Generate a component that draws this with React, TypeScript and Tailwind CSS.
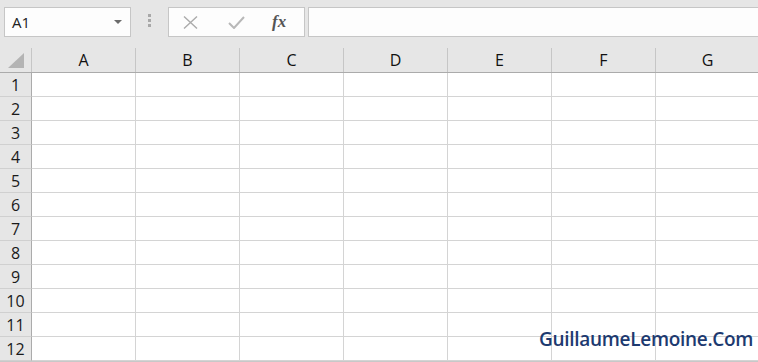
import React from 'react'

const COLS = ['A', 'B', 'C', 'D', 'E', 'F', 'G']
const ROWS = Array.from({ length: 12 }, (_, i) => i + 1)

const FormulaBar = () => {
  return (
    <div className="flex h-[48px] items-start pt-[7px]">
      <div className="ml-[4px] flex h-[30px] w-[127px] items-center justify-between border border-[#c6c6c6] bg-[#fdfdfd] pl-[7px] pr-[8px]">
        <span className="text-[15px] text-[#222]">A1</span>
        <svg width="8" height="5" viewBox="0 0 8 5">
          <path d="M0 0 L8 0 L4 4 Z" fill="#6b6b6b" />
        </svg>
      </div>
      <div className="flex w-[37px] flex-col items-center gap-[2px] pt-[7px]">
        <span className="block h-[3px] w-[3px] bg-[#a8a8a8]" />
        <span className="block h-[3px] w-[3px] bg-[#a8a8a8]" />
        <span className="block h-[3px] w-[3px] bg-[#a8a8a8]" />
      </div>
      <div className="flex h-[30px] w-[137px] items-center border border-[#c6c6c6] bg-[#fdfdfd]">
        <svg className="ml-[14px]" width="15" height="13" viewBox="0 0 15 13">
          <path d="M1 0.5 L14 12.5 M14 0.5 L1 12.5" stroke="#ababab" strokeWidth="1.4" fill="none" />
        </svg>
        <svg className="ml-[30px]" width="17" height="13" viewBox="0 0 17 13">
          <path d="M1 7 L6 12 L16 1" stroke="#b8b8b8" strokeWidth="2" fill="none" />
        </svg>
        <span className="ml-[27px] font-['Liberation_Serif',serif] text-[17px] font-bold italic text-[#555]">
          fx
        </span>
      </div>
      <div className="ml-[3px] h-[30px] flex-1 border border-r-0 border-[#c6c6c6] bg-[#fdfdfd]" />
    </div>
  )
}

const App = () => {
  return (
    <div className="relative h-[362px] w-[758px] overflow-hidden bg-[#e6e6e6] font-['Open_Sans','Noto_Sans',sans-serif]">
      <FormulaBar />
      <div className="flex h-[25px] border-b border-[#ababab]">
        <div className="flex w-[32px] shrink-0 items-end justify-center border-r border-[#c6c6c6] pb-[4px]">
          <svg width="16" height="15" viewBox="0 0 16 15">
            <path d="M16 0 L16 15 L0 15 Z" fill="#b4b4b4" />
          </svg>
        </div>
        {COLS.map((c) => (
          <div
            key={c}
            className="flex w-[104px] shrink-0 items-center justify-center border-r border-[#c6c6c6] text-[16px] text-[#111]"
          >
            {c}
          </div>
        ))}
      </div>
      {ROWS.map((r) => (
        <div key={r} className="flex h-[24px]">
          <div className="flex w-[32px] shrink-0 items-center justify-center border-r border-b border-r-[#ababab] border-b-[#d0d0d0] text-[16px] text-[#1a1a1a]">
            {r}
          </div>
          {COLS.map((c) => (
            <div
              key={c}
              className="w-[104px] shrink-0 border-r border-b border-[#d4d4d4] bg-white"
            />
          ))}
        </div>
      ))}
      <div className="h-[2px] bg-[#c8c8c8]" />
      <div className="absolute left-[539px] top-[325px] whitespace-nowrap text-[19px] font-semibold tracking-[-0.3px] text-[#1d3a70]">
        GuillaumeLemoine.Com
      </div>
    </div>
  )
}

export default App
